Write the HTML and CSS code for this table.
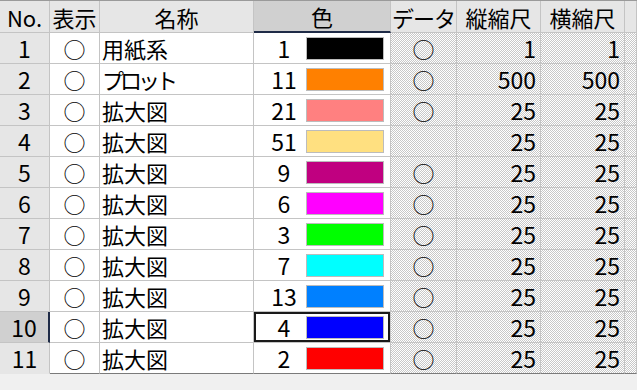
FILE: index.html
```html
<!DOCTYPE html>
<html lang="ja">
<head>
<meta charset="utf-8">
<title>レイヤー</title>
<link rel="stylesheet" href="styles.css">
</head>
<body>
<div class="sheet">
  <div class="hd corner">No.</div>
  <div class="hd">表示</div>
  <div class="hd">名称</div>
  <div class="hd hd-active">色</div>
  <div class="hd kana-hd">データ</div>
  <div class="hd">縦縮尺</div>
  <div class="hd">横縮尺</div>
  <div class="hd"></div>

  <div class="rh">1</div><div class="c ctr">○</div><div class="c name">用紙系</div>
  <div class="c color"><span class="num">1</span><span class="sw" style="background:#000000"></span></div>
  <div class="c ro ctr">○</div><div class="c ro rt">1</div><div class="c ro rt">1</div><div class="c ro"></div>

  <div class="rh">2</div><div class="c ctr">○</div><div class="c name kana">プロット</div>
  <div class="c color"><span class="num">11</span><span class="sw" style="background:#ff8000"></span></div>
  <div class="c ro ctr">○</div><div class="c ro rt">500</div><div class="c ro rt">500</div><div class="c ro"></div>

  <div class="rh">3</div><div class="c ctr">○</div><div class="c name">拡大図</div>
  <div class="c color"><span class="num">21</span><span class="sw" style="background:#ff8080"></span></div>
  <div class="c ro ctr">○</div><div class="c ro rt">25</div><div class="c ro rt">25</div><div class="c ro"></div>

  <div class="rh">4</div><div class="c ctr">○</div><div class="c name">拡大図</div>
  <div class="c color"><span class="num">51</span><span class="sw" style="background:#ffe080"></span></div>
  <div class="c ro ctr"></div><div class="c ro rt">25</div><div class="c ro rt">25</div><div class="c ro"></div>

  <div class="rh">5</div><div class="c ctr">○</div><div class="c name">拡大図</div>
  <div class="c color"><span class="num">9</span><span class="sw" style="background:#c00080"></span></div>
  <div class="c ro ctr">○</div><div class="c ro rt">25</div><div class="c ro rt">25</div><div class="c ro"></div>

  <div class="rh">6</div><div class="c ctr">○</div><div class="c name">拡大図</div>
  <div class="c color"><span class="num">6</span><span class="sw" style="background:#ff00ff"></span></div>
  <div class="c ro ctr">○</div><div class="c ro rt">25</div><div class="c ro rt">25</div><div class="c ro"></div>

  <div class="rh">7</div><div class="c ctr">○</div><div class="c name">拡大図</div>
  <div class="c color"><span class="num">3</span><span class="sw" style="background:#00ff00"></span></div>
  <div class="c ro ctr">○</div><div class="c ro rt">25</div><div class="c ro rt">25</div><div class="c ro"></div>

  <div class="rh">8</div><div class="c ctr">○</div><div class="c name">拡大図</div>
  <div class="c color"><span class="num">7</span><span class="sw" style="background:#00ffff"></span></div>
  <div class="c ro ctr">○</div><div class="c ro rt">25</div><div class="c ro rt">25</div><div class="c ro"></div>

  <div class="rh">9</div><div class="c ctr">○</div><div class="c name">拡大図</div>
  <div class="c color"><span class="num">13</span><span class="sw" style="background:#0080ff"></span></div>
  <div class="c ro ctr">○</div><div class="c ro rt">25</div><div class="c ro rt">25</div><div class="c ro"></div>

  <div class="rh rh-active">10</div><div class="c ctr">○</div><div class="c name">拡大図</div>
  <div class="c color selected"><span class="num">4</span><span class="sw" style="background:#0000ff"></span></div>
  <div class="c ro ctr">○</div><div class="c ro rt">25</div><div class="c ro rt">25</div><div class="c ro"></div>

  <div class="rh last">11</div><div class="c ctr last">○</div><div class="c name last">拡大図</div>
  <div class="c color last"><span class="num">2</span><span class="sw" style="background:#ff0000"></span></div>
  <div class="c ro ctr last">○</div><div class="c ro rt last">25</div><div class="c ro rt last">25</div><div class="c ro last"></div>
</div>
</body>
</html>
```

FILE: styles.css
```css
* { box-sizing: border-box; }

html, body {
  margin: 0;
  padding: 0;
  background: #f0f0f0;
}

body {
  width: 637px;
  height: 390px;
  overflow: hidden;
  font-family: "Noto Sans CJK JP", "Noto Sans", sans-serif;
  font-size: 22px;
  color: #000;
}

.sheet {
  display: grid;
  grid-template-columns: 50px 50px 154px 137px 66px 84px 84px 12px;
  grid-template-rows: 32px;
  grid-auto-rows: 31px;
  border-top: 1px solid #9a9a9a;
}

.hd, .rh, .c {
  display: flex;
  align-items: center;
  line-height: 1;
  white-space: nowrap;
  border-right: 1px solid #c4c4c4;
  border-bottom: 1px solid #c4c4c4;
}

.hd {
  justify-content: center;
  background: #e6e6e6;
}

.kana-hd { letter-spacing: -1px; }

.hd-active {
  background: #d0d0d0;
  border-bottom: 2px solid #1f2b47;
}

.rh {
  justify-content: center;
  background: #e6e6e6;
  font-size: 23px;
}

.rh-active {
  background: #d0d0d0;
  border-right: 2px solid #1f2b47;
}

.c {
  background: #ffffff;
}

.ctr { justify-content: center; }

.rt {
  justify-content: flex-end;
  padding-right: 4px;
  font-size: 23px;
}

.name {
  padding-left: 2px;
}

.kana { letter-spacing: -4px; }

.ro {
  background: repeating-conic-gradient(#c8c8c8 0 25%, #ffffff 0 50%) 0 0 / 2px 2px;
}

.color {
  padding-left: 8px;
}

.num {
  width: 44px;
  text-align: center;
  font-size: 23px;
}

.sw {
  width: 78px;
  height: 23px;
  border: 1px solid #bcbcbc;
}

.selected {
  box-shadow: inset 0 0 0 2px #1a1a1a;
}

.c.last { border-bottom: 1px solid #7a7a7a; }
.rh.last { border-bottom: 1px solid #e6e6e6; }
```
